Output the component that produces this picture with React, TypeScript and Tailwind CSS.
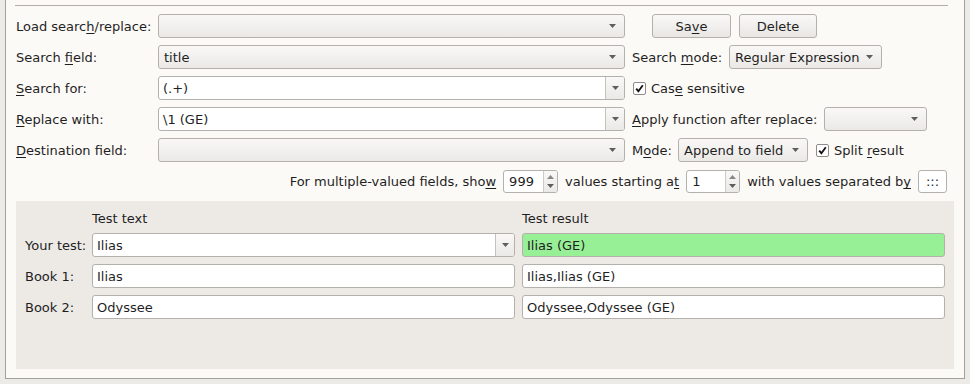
import React from "react";

const Arrow = () => (
  <svg width="7" height="4" viewBox="0 0 7 4">
    <path d="M0 0h7L3.5 4z" fill="#5e5e5e" />
  </svg>
);

const Mn = ({ a, u, b }: { a?: string; u: string; b?: string }) => (
  <span className="whitespace-pre">
    {a}
    <u className="underline-offset-2">{u}</u>
    {b}
  </span>
);

const Combo = ({ w, text }: { w: string; text?: string }) => (
  <div
    className={`${w} h-[24px] flex items-center border border-[#b4b1ad] rounded-[3px] bg-linear-to-b from-[#f9f8f7] to-[#ebe9e6] pl-[5px] pr-[8px]`}
  >
    <span className="flex-1 whitespace-pre pt-px">{text}</span>
    <Arrow />
  </div>
);

const EditCombo = ({ w, text }: { w: string; text?: string }) => (
  <div className={`${w} h-[24px] flex border border-[#b4b1ad] rounded-[3px] bg-white overflow-hidden`}>
    <span className="flex-1 flex items-center pl-[4px] pt-px whitespace-pre">{text}</span>
    <div className="w-[19px] flex items-center justify-center border-l border-[#c6c3bf] bg-linear-to-b from-[#f9f8f7] to-[#ebe9e6]">
      <Arrow />
    </div>
  </div>
);

const Field = ({ w, text, bg = "bg-white" }: { w: string; text: string; bg?: string }) => (
  <div className={`${w} h-[24px] flex items-center border border-[#b4b1ad] rounded-[3px] ${bg} pl-[4px] pt-px whitespace-pre`}>
    {text}
  </div>
);

const Check = () => (
  <div className="w-[13px] h-[13px] border border-[#8e8b88] bg-white rounded-[2px] flex items-center justify-center">
    <svg width="9" height="9" viewBox="0 0 9 9">
      <path d="M1.2 4.6L3.4 7.2L7.8 1.2" fill="none" stroke="#111" strokeWidth="1.8" />
    </svg>
  </div>
);

const Spin = ({ w, value }: { w: string; value: string }) => (
  <div className={`${w} h-[23px] flex border border-[#b4b1ad] rounded-[3px] bg-white overflow-hidden`}>
    <span className="flex-1 flex items-center pl-[5px] pt-px">{value}</span>
    <div className="w-[14px] flex flex-col items-center justify-between py-[4px] border-l border-[#cfccc8] bg-linear-to-b from-[#f9f8f7] to-[#ebe9e6]">
      <svg width="7" height="4" viewBox="0 0 7 4">
        <path d="M0 4h7L3.5 0z" fill="#8a8884" />
      </svg>
      <svg width="7" height="4" viewBox="0 0 7 4">
        <path d="M0 0h7L3.5 4z" fill="#5e5e5e" />
      </svg>
    </div>
  </div>
);

const Button = ({ w, children }: { w: string; children: React.ReactNode }) => (
  <div
    className={`${w} h-[24px] flex items-center justify-center pt-px border border-[#b4b1ad] rounded-[3px] bg-linear-to-b from-[#f9f8f7] to-[#e9e7e4]`}
  >
    {children}
  </div>
);

export default function App() {
  return (
    <div className="w-[970px] h-[384px] bg-[#edebe8] px-[5px] pb-[5px] font-['DejaVu_Sans',sans-serif] text-[13px] text-[#1f1f1f]">
      <div className="h-full border-x border-b border-[#a3a19e] bg-[#fcfaf7] flex flex-col">
        <div className="mt-[5px] h-px bg-[#b2afab] ml-[9px] mr-[16px]" />

        <div className="mt-[8px] pl-[10px] flex flex-col gap-[7px]">
          <div className="flex items-center">
            <div className="w-[142px] pt-px">
              <Mn a="Load searc" u="h" b="/replace:" />
            </div>
            <Combo w="w-[467px]" />
            <div className="ml-[27px]">
              <Button w="w-[79px]">
                <Mn a="Sa" u="v" b="e" />
              </Button>
            </div>
            <div className="ml-[8px]">
              <Button w="w-[78px]">Delete</Button>
            </div>
          </div>

          <div className="flex items-center">
            <div className="w-[142px] pt-px">
              <Mn a="Search " u="f" b="ield:" />
            </div>
            <Combo w="w-[467px]" text="title" />
            <div className="ml-[7px] w-[97px] pt-px">
              <Mn a="Search " u="m" b="ode:" />
            </div>
            <Combo w="w-[153px]" text="Regular Expression" />
          </div>

          <div className="flex items-center">
            <div className="w-[142px] pt-px">
              <Mn u="S" b="earch for:" />
            </div>
            <EditCombo w="w-[467px]" text="(.+)" />
            <div className="ml-[8px]">
              <Check />
            </div>
            <div className="ml-[5px] pt-px">
              <Mn a="Cas" u="e" b=" sensitive" />
            </div>
          </div>

          <div className="flex items-center">
            <div className="w-[142px] pt-px">
              <Mn u="R" b="eplace with:" />
            </div>
            <EditCombo w="w-[467px]" text="\1 (GE)" />
            <div className="ml-[7px] w-[192px] pt-px">
              <Mn u="A" b="pply function after replace:" />
            </div>
            <Combo w="w-[103px]" />
          </div>

          <div className="flex items-center">
            <div className="w-[142px] pt-px">
              <Mn u="D" b="estination field:" />
            </div>
            <Combo w="w-[467px]" />
            <div className="ml-[7px] w-[46px] pt-px">
              <Mn a="M" u="o" b="de:" />
            </div>
            <Combo w="w-[130px]" text="Append to field" />
            <div className="ml-[8px]">
              <Check />
            </div>
            <div className="ml-[5px] pt-px">
              <Mn a="Split " u="r" b="esult" />
            </div>
          </div>

          <div className="flex items-center justify-end gap-[7px] pr-[17px] mt-[1px]">
            <span className="pt-px">
              <Mn a="For multiple-valued fields, sho" u="w" />
            </span>
            <Spin w="w-[55px]" value="999" />
            <span className="pt-px">
              <Mn a="values starting a" u="t" />
            </span>
            <Spin w="w-[54px]" value="1" />
            <span className="pt-px">
              <Mn a="with values separated b" u="y" />
            </span>
            <div className="w-[29px] h-[23px] flex items-center justify-center border border-[#b4b1ad] rounded-[3px] bg-white">
              :::
            </div>
          </div>
        </div>

        <div className="mx-[10px] mt-[8px] h-[168px] bg-[#edeae6] px-[9px] pt-[10px]">
          <div className="h-[15px] flex items-center">
            <div className="w-[67px]" />
            <div className="w-[423px]">Test text</div>
            <div className="ml-[7px]">Test result</div>
          </div>
          <div className="mt-[7px] flex flex-col gap-[7px]">
            <div className="flex items-center">
              <div className="w-[67px] pt-px">Your test:</div>
              <EditCombo w="w-[423px]" text="Ilias" />
              <div className="ml-[7px]">
                <Field w="w-[423px]" text="Ilias (GE)" bg="bg-[#98f096]" />
              </div>
            </div>
            <div className="flex items-center">
              <div className="w-[67px] pt-px">Book 1:</div>
              <Field w="w-[423px]" text="Ilias" />
              <div className="ml-[7px]">
                <Field w="w-[423px]" text="Ilias,Ilias (GE)" />
              </div>
            </div>
            <div className="flex items-center">
              <div className="w-[67px] pt-px">Book 2:</div>
              <Field w="w-[423px]" text="Odyssee" />
              <div className="ml-[7px]">
                <Field w="w-[423px]" text="Odyssee,Odyssee (GE)" />
              </div>
            </div>
          </div>
        </div>
      </div>
    </div>
  );
}
